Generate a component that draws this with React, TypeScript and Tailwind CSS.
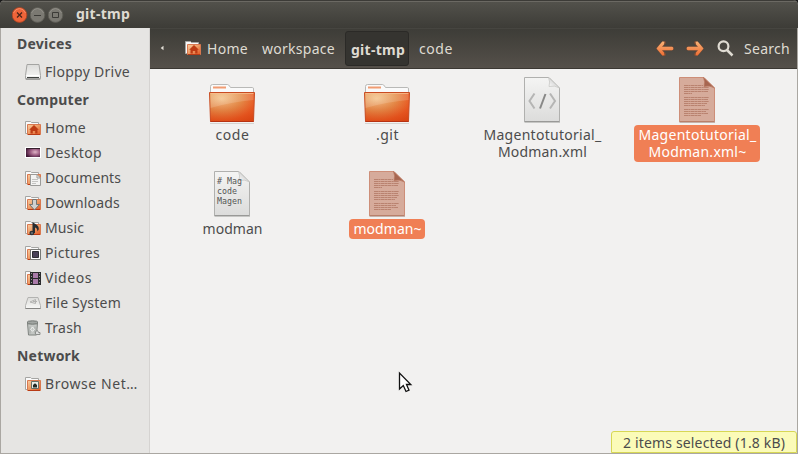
import React, { useLayoutEffect, useRef, useState } from "react";

/** A single line of text tracked out to a fixed width. */
function Fit({ text, w, className = "" }: { text: string; w: number; className?: string }) {
  const ref = useRef<HTMLSpanElement>(null);
  const [spacing, setSpacing] = useState(0);
  useLayoutEffect(() => {
    const natural = ref.current!.getBoundingClientRect().width;
    setSpacing((w - natural) / text.length);
  }, []);
  return (
    <span ref={ref} className={`inline-block whitespace-pre ${className}`} style={{ letterSpacing: spacing }}>
      {text}
    </span>
  );
}

type Place = "home" | "desktop" | "documents" | "downloads" | "music" | "pictures" | "videos" | "network" | "floppy" | "disk" | "trash";

function PlaceIcon({ kind }: { kind: Place }) {
  const folder = !["desktop", "floppy", "disk", "trash"].includes(kind);
  return (
    <svg width="16" height="16" viewBox="0 0 16 16" className="shrink-0">
      {folder && (
        <>
          <path d="M.5 13.5V1.5H5.5L6.5 2.5H13.5V13.5z" fill="#fafafa" stroke="#a5a5a3" />
          <path d="M2.5 4.5H15.5V14.5H2.5z" fill="url(#sf)" stroke="#d9784f" />
          <path d="M3 14.5H15" stroke="#b83a15" />
        </>
      )}
      {kind === "home" && <path d="M9 5 13.8 9.7H12.5V13.5H10.2V11H7.8V13.5H5.5V9.7H4.2z" fill="#bd3b14" />}
      {kind === "desktop" && (
        <>
          <path d="M0 2H16V13H0z" fill="#fff" />
          <path d="M1 3H15V12H1z" fill="url(#dt)" />
          <path d="M1 3.5H15" stroke="#35202c" />
        </>
      )}
      {kind === "documents" && (
        <>
          <path d="M5.5 4.5H12L15.5 8V15.5H5.5z" fill="#f3f3f2" stroke="#9b9b99" />
          <path d="M12 4.5V8H15.5" fill="none" stroke="#9b9b99" />
          <path d="M7 9.5h6M7 11.5h6M7 13.5h4" fill="none" stroke="#c4c4c2" />
        </>
      )}
      {kind === "downloads" && <path d="M7.5 4.5h4v5h3L9.5 15 4.5 9.500h3z" fill="#cfd0cf" stroke="#737572" />}
      {kind === "music" && (
        <>
          <ellipse cx="6.9" cy="13" rx="2.5" ry="2.300" fill="#30363a" />
          <path d="M7.500 13V2C10 4.500 14.500 5 13.700 9.500L12.500 11.500C12.500 9 11.500 8 10 7.500V13z" fill="#272d31" />
          <circle cx="7" cy="13" r="1" fill="#73777a" />
        </>
      )}
      {kind === "pictures" && (
        <>
          <path d="M5.5 4.5H15.5V14.5H5.5z" fill="#fff" stroke="#777976" />
          <path d="M7.5 6.5H13.5V12.5H7.5z" fill="#494158" stroke="#2d2d32" />
        </>
      )}
      {kind === "videos" && (
        <>
          <path d="M5 2H16V15H5z" fill="#2b2b2d" />
          <path d="M8 3H13V8H8zM8 9H13V14H8z" fill="#aa7ba9" />
          <path d="M6.5 3V15M14.5 3V15" stroke="#9b9b9b" strokeDasharray="1 2" />
        </>
      )}
      {kind === "network" && (
        <>
          <path d="M6.5 5.5H13.5V12.5H6.5z" fill="#e9ede7" stroke="#657066" />
          <path d="M8 11.5V9L10 7.3 12 9V11.5z" fill="#222a25" />
        </>
      )}
      {kind === "floppy" && (
        <>
          <rect x=".5" y="13" width="15" height="3" rx="1" fill="#9d9d9b" />
          <path d="M2 .5H14L15.5 11.5V14.5H.5V11.5z" fill="url(#dk)" stroke="#a4a4a2" />
          <path d="M2 13.5H14" stroke="#3f4240" />
          <path d="M1.5 11.5H14.5" stroke="#fff" />
        </>
      )}
      {kind === "disk" && (
        <>
          <path d="M3 2.5H13L15.5 10.5V13.5H.5V10.5z" fill="url(#dk)" stroke="#b3b3b1" />
          <path d="M.5 13.5H15.5" stroke="#858583" />
          <path d="M10.5 4.500 5 7 10.500 8.500zM8 6.500H12" fill="none" stroke="#b3b3b1" />
        </>
      )}
      {kind === "trash" && (
        <>
          <path d="M2.5 3 3.5 15H11.5L12.5 3z" fill="#c4c7c4" stroke="#7e837f" />
          <ellipse cx="7.5" cy="2.5" rx="5.5" ry="1.7" fill="#a2a6a3" stroke="#717672" />
          <path d="M5 6.5v7M10 6.5v7" stroke="#a3a7a4" />
          <path d="M5.5 9.5 7.5 7 9.5 9.5 7.5 11z" fill="none" stroke="#f0f2f0" />
          <path d="M10.5 14.5v-3l2-1 1 2h1.5v2z" fill="#dedede" stroke="#8c8f8c" />
        </>
      )}
    </svg>
  );
}

function Defs() {
  return (
    <svg width="0" height="0" className="absolute">
      <defs>
        <linearGradient id="sf" x1="0" y1="0" x2="1" y2="1">
          <stop offset="0" stopColor="#f8cca0" />
          <stop offset=".5" stopColor="#ed9a63" />
          <stop offset="1" stopColor="#e2541f" />
        </linearGradient>
        <radialGradient id="dt" cx=".65" cy=".45" r=".7">
          <stop offset="0" stopColor="#e0b4c6" />
          <stop offset=".5" stopColor="#9a5a80" />
          <stop offset="1" stopColor="#3f1735" />
        </radialGradient>
        <linearGradient id="dk" x1="0" y1="0" x2="0" y2="1">
          <stop offset="0" stopColor="#dcdcda" />
          <stop offset="1" stopColor="#f7f7f6" />
        </linearGradient>
        <radialGradient id="fold" cx=".27" cy=".22" r=".95">
          <stop offset="0" stopColor="#f5ce95" />
          <stop offset=".45" stopColor="#e5934e" />
          <stop offset=".8" stopColor="#ea5a22" />
          <stop offset="1" stopColor="#e04a17" />
        </radialGradient>
        <linearGradient id="fb" x1="0" y1="0" x2="0" y2="1">
          <stop offset="0" stopColor="#e0562a" stopOpacity="0" />
          <stop offset="1" stopColor="#d2400f" stopOpacity=".45" />
        </linearGradient>
        <linearGradient id="pg" x1="0" y1="0" x2="0" y2="1">
          <stop offset="0" stopColor="#f4f4f3" />
          <stop offset="1" stopColor="#dcdcdb" />
        </linearGradient>
        <linearGradient id="nav" x1="0" y1="0" x2="0" y2="1">
          <stop offset="0" stopColor="#f9b377" />
          <stop offset="1" stopColor="#ee6d33" />
        </linearGradient>
        <linearGradient id="crl" x1="0" y1="1" x2="1" y2="0">
          <stop offset="0" stopColor="#fff" />
          <stop offset="1" stopColor="#b9b9b8" />
        </linearGradient>
      </defs>
    </svg>
  );
}

function FolderIcon() {
  return (
    <svg width="48" height="50" viewBox="0 0 48 50">
      <path d="M2 48.5H46" stroke="#d5d3d0" />
      <path d="M2.5 46V11.5Q2.5 9.5 4.500 9.500H19.500Q20.500 9.500 21.500 11L22.500 12.500H44.500Q45.500 12.500 45.500 14V46z" fill="#fafafa" stroke="#b9b9b7" />
      <path d="M5 12.500H18" stroke="#f19c72" strokeWidth="2" />
      <path d="M1.500 17.500H46.500L45.500 46.500H2.500z" fill="url(#fold)" stroke="#c94c22" />
      <path d="M2 18H46L45 46H3z" fill="url(#fb)" />
      <path d="M2.500 18.500H45.500V25Q23 27 2.500 33z" fill="#fff" opacity=".15" />
      <path d="M2.500 18.500H45.500" stroke="#f9c091" opacity=".8" />
      <path d="M2.500 46.500H45.500" stroke="#b73212" />
    </svg>
  );
}

function PageIcon({ kind }: { kind: "xml" | "text" | "backup" }) {
  const backup = kind === "backup";
  return (
    <svg width="48" height="50" viewBox="0 0 48 50">
      <path d="M6.500 47.500H42" stroke={backup ? "#c5b2aa" : "#c6c6c4"} />
      <path d="M6.500 2.500H31L41.500 13V46.500H6.500z" fill={backup ? "#d6ab9b" : "url(#pg)"} stroke={backup ? "#cd8e78" : "#b0b0ae"} />
      <path d="M6.500 46.500H41.500" stroke={backup ? "#b87f6b" : "#999997"} />
      <path d="M30.500 2.500Q32.500 7 31 11.500Q37 10 41.500 13z" fill={backup ? "#a76650" : "url(#crl)"} stroke={backup ? "#b97861" : "#c4c4c2"} strokeWidth=".7" />
      {kind === "xml" && (
        <g fill="none">
          <path d="M16.500 18.500 11.500 26 16.500 33.500M32 18.500 37 26 32 33.500" stroke="#b5b5b4" strokeWidth="2" />
          <path d="M27.500 19 22 33.500" stroke="#888887" strokeWidth="2" />
        </g>
      )}
      {backup && (
        <g stroke="#b9826f" strokeWidth="1" strokeDasharray="4 .35 2 .35">
          <path d="M11 10.500H30M11 12.500H36M11 14.500H36M11 16.500H35M11 18.500H19M11 22.500H36M11 24.500H35M11 26.500H36M11 28.500H34M11 30.500H32M11 34.500H36M11 36.500H33M11 38.500H35M11 40.500H28" />
        </g>
      )}
      {kind === "text" && (
        <g fontFamily="'DejaVu Sans Mono', monospace" fontSize="8.300" fill="#555">
          <text x="9" y="14.500" textLength="25">{"# Mag"}</text>
          <text x="9" y="24.500" textLength="20">code</text>
          <text x="9" y="34.500" textLength="25">Magen</text>
        </g>
      )}
    </svg>
  );
}

const sections: { title: string; w: number; rows: [Place, string, number][] }[] = [
  { title: "Devices", w: 55, rows: [["floppy", "Floppy Drive", 85]] },
  {
    title: "Computer",
    w: 72,
    rows: [
      ["home", "Home", 41],
      ["desktop", "Desktop", 57],
      ["documents", "Documents", 76],
      ["downloads", "Downloads", 75],
      ["music", "Music", 39],
      ["pictures", "Pictures", 55],
      ["videos", "Videos", 47],
      ["disk", "File System", 76],
      ["trash", "Trash", 37],
    ],
  },
  { title: "Network", w: 63, rows: [["network", "Browse Net…", 93]] },
];

type Item = { icon: "folder" | "xml" | "text" | "backup"; lines: [string, number][]; selected?: boolean };
const items: Item[] = [
  { icon: "folder", lines: [["code", 34]] },
  { icon: "folder", lines: [[".git", 23]] },
  { icon: "xml", lines: [["Magentotutorial_", 118], ["Modman.xml", 89]] },
  { icon: "backup", lines: [["Magentotutorial_", 118], ["Modman.xml~", 98]], selected: true },
  { icon: "text", lines: [["modman", 60]] },
  { icon: "backup", lines: [["modman~", 68]], selected: true },
];

function WindowButton({ kind }: { kind: "close" | "min" | "max" }) {
  const close = kind === "close";
  return (
    <svg width="16" height="16" viewBox="0 0 16 16">
      <circle cx="7.500" cy="8" r="7.400" fill={close ? "#ee6439" : "#7b7972"} stroke={close ? "#a9411f" : "#5b5952"} strokeWidth=".8" />
      <path d="M1.500 6Q3.500 1.500 7.500 1.500T13.500 6" fill="none" stroke={close ? "#f68b67" : "#908e87"} strokeWidth="1" />
      {close && <path d="M5 5.500 10 10.500M10 5.500 5 10.500" stroke="#4b2519" strokeWidth="1.300" />}
      {kind === "min" && <path d="M4 8.500H11" stroke="#3c3b37" />}
      {kind === "max" && <path d="M4.500 5.500H10.500V10.500H4.500z" fill="none" stroke="#3c3b37" />}
    </svg>
  );
}

function BackArrow() {
  return (
    <>
      <path d="M8 1.700 2.500 7.500 8 13.300M3 7.500H16" fill="none" stroke="#a94d23" strokeWidth="4" strokeLinecap="round" strokeLinejoin="round" opacity=".45" />
      <path d="M8.500 .8 6.300 .4.500 7.500 6.300 14.600 8.500 14.200 8 11.500 6 9.200H16Q17.300 9.200 17.300 7.500T16 5.800H6L8 3.500z" fill="url(#nav)" />
    </>
  );
}

export default function App() {
  return (
    <div className="relative h-[454px] w-[798px] overflow-hidden bg-[#1b1b1b] font-['Noto_Sans','Open_Sans',sans-serif] text-[14px] text-[#4c4c4c]">
      <Defs />
      <div className="flex h-full flex-col overflow-hidden rounded-t-[5px] bg-[#aaa7a2]">
        <header className="flex h-7 shrink-0 items-center border-t border-[#3c3b37] bg-gradient-to-b from-[#53524c] to-[#3d3c37] pl-3 text-[#dfdbd2] shadow-[inset_0_1px_0_#6b6963]">
          <div className="flex gap-[2px]">
            <WindowButton kind="close" />
            <WindowButton kind="min" />
            <WindowButton kind="max" />
          </div>
          <Fit text="git-tmp" w={54} className="mb-[2px] ml-3 font-bold leading-[26px]" />
        </header>

        <div className="flex min-h-0 flex-1 px-px pb-px">
          <aside className="w-[149px] shrink-0 border-r border-[#d5d3d1] bg-[#e6e5e3]">
            {sections.map((s) => (
              <section key={s.title}>
                <h2 className="flex h-[31px] items-center pl-4 font-bold leading-none">
                  <Fit text={s.title} w={s.w} />
                </h2>
                {s.rows.map(([kind, name, w]) => (
                  <div key={name} className="flex h-[25px] items-center gap-1 pl-6">
                    <PlaceIcon kind={kind} />
                    <Fit text={name} w={w} />
                  </div>
                ))}
              </section>
            ))}
          </aside>

          <main className="flex min-w-0 flex-1 flex-col bg-[#f2f1f0]">
            <nav className="flex h-[41px] shrink-0 items-center border-b border-[#3b3833] bg-gradient-to-b from-[#3d3c37] to-[#55504a] text-[#dfdbd2] shadow-[inset_0_1px_0_#464540]">
              <svg width="4" height="6" viewBox="0 0 4 6" className="ml-[10px]">
                <path d="M3.500 .7V5.300L.7 3z" fill="#e4e0d8" />
              </svg>
              <div className="ml-[21px]">
                <PlaceIcon kind="home" />
              </div>
              <Fit text="Home" w={41} className="ml-[6px]" />
              <Fit text="workspace" w={73} className="ml-[14px]" />
              <div className="ml-[10px] mt-px flex h-[35px] w-16 items-center justify-center rounded-[3px] border border-[#2b2a27] bg-[#353430] pl-[2px] pt-px font-bold">
                <Fit text="git-tmp" w={54} />
              </div>
              <Fit text="code" w={34} className="ml-[10px]" />
              <div className="ml-auto flex items-center">
                <svg width="18" height="15" viewBox="0 0 18 15">
                  <BackArrow />
                </svg>
                <svg width="18" height="15" viewBox="0 0 18 15" className="ml-3">
                  <g transform="translate(18 0) scale(-1 1)">
                    <BackArrow />
                  </g>
                </svg>
                <svg width="17" height="17" viewBox="0 0 17 17" className="ml-[13px]">
                  <circle cx="6.500" cy="6.300" r="4.900" fill="none" stroke="#dfdbd2" strokeWidth="2.200" />
                  <path d="M10 10 15.500 15.500" stroke="#dfdbd2" strokeWidth="2.500" />
                </svg>
                <Fit text="Search" w={46} className="ml-[10px] mr-[7px]" />
              </div>
            </nav>

            <div className="grid flex-1 auto-rows-[94px] grid-cols-[repeat(4,155px)] content-start pl-[4px] pt-[6px]">
              {items.map((it, i) => (
                <div key={i} className="flex flex-col items-center">
                  {it.icon === "folder" ? <FolderIcon /> : <PageIcon kind={it.icon} />}
                  <div className={`flex flex-col items-center rounded-[4px] pb-[2px] pl-[5px] pr-[3px] pt-px leading-[17px] ${it.selected ? "bg-[#f07f55] text-white" : ""}`}>
                    {it.lines.map(([t, w]) => (
                      <Fit key={t} text={t} w={w} />
                    ))}
                  </div>
                </div>
              ))}
            </div>

            <footer className="flex h-[22px] w-[186px] items-center self-end rounded-t-[3px] border border-[#d7d754] bg-[#fbfbb8] pl-[11px]">
              <Fit text="2 items selected (1.8 kB)" w={162} />
            </footer>
          </main>
        </div>
      </div>

      <svg width="16" height="23" viewBox="0 0 16 23" className="absolute left-[398px] top-[371px]">
        <path d="M1.500 2V18L5.300 14.500 8 20.500 11 19.200 8.500 13.500H12.800z" fill="#fff" stroke="#111" strokeWidth="1.300" />
      </svg>
    </div>
  );
}
